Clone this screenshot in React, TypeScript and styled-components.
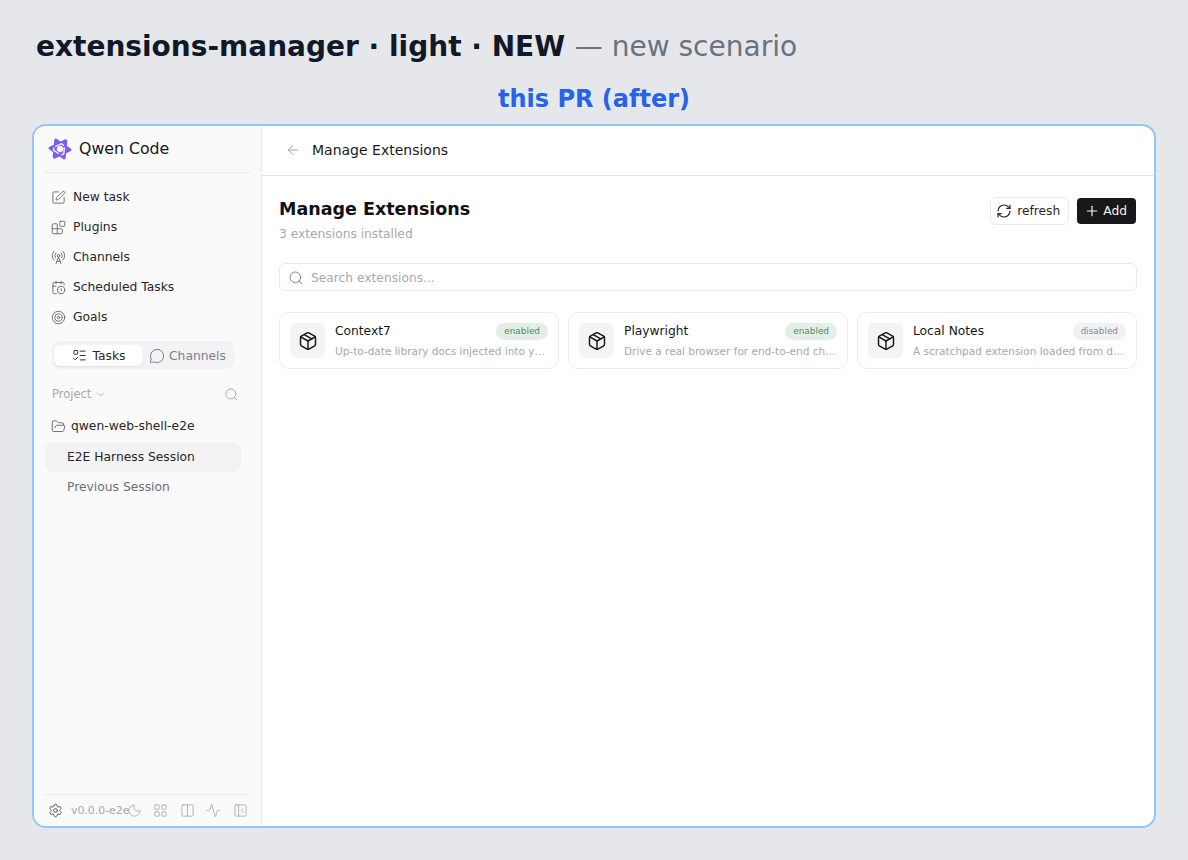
import * as React from "react";
import styled, { createGlobalStyle } from "styled-components";
import {
  Activity,
  ArrowLeft,
  Blocks,
  CalendarClock,
  ChevronDown,
  Columns2,
  FolderOpen,
  LayoutGrid,
  ListTodo,
  MessageCircle,
  Moon,
  Package,
  PanelLeftClose,
  Plus,
  RadioTower,
  RefreshCw,
  Search,
  Settings,
  SquarePen,
  Target,
} from "lucide-react";

const GlobalStyle = createGlobalStyle`
  html, body {
    margin: 0;
    padding: 0;
    height: 860px;
    overflow: hidden;
    background: #e5e7eb;
    font-family: "DejaVu Sans", sans-serif;
  }
`;

const Page = styled.div`
  height: 860px;
  box-sizing: border-box;
  padding: 28px 32px 32px;
  display: flex;
  flex-direction: column;
`;

const Heading = styled.h1`
  margin: 0 0 0 4px;
  font-size: 28px;
  line-height: 38px;
  font-weight: 700;
  color: #111827;
  white-space: nowrap;
`;

const HeadingNote = styled.span`
  font-weight: 400;
  color: #6b7280;
`;

const Caption = styled.div`
  margin-top: 18px;
  height: 40px;
  text-align: center;
  font-size: 24px;
  line-height: 30px;
  font-weight: 700;
  color: #2563eb;
`;

const Frame = styled.div`
  flex: 1;
  display: flex;
  min-height: 0;
  background: #fff;
  border: 2px solid #93c5fd;
  border-radius: 14px;
  overflow: hidden;
`;

const Sidebar = styled.aside`
  width: 207px;
  flex: none;
  display: flex;
  flex-direction: column;
  background: #fafafa;
  border-right: 1px solid #e9e9ea;
  padding: 0 10px;
`;

const Brand = styled.div`
  height: 47px;
  box-sizing: border-box;
  display: flex;
  align-items: center;
  gap: 7px;
  padding: 0 0 1px 4px;
  border-bottom: 1px solid #ececed;
  font-size: 15.75px;
  color: #18181b;
`;

const NavList = styled.nav`
  margin-top: 9px;
  display: flex;
  flex-direction: column;
`;

const NavItem = styled.div`
  height: 30px;
  display: flex;
  align-items: center;
  gap: 7.5px;
  padding-left: 6.5px;
  font-size: 12.3px;
  color: #27272a;

  svg {
    color: #6b6b73;
  }
`;

const Segments = styled.div`
  margin: 9px 0 0 8px;
  width: 182px;
  height: 28px;
  box-sizing: border-box;
  padding: 4px 2px 3px;
  display: flex;
  align-items: center;
  background: #f3f3f5;
  border-radius: 8px;
`;

const Segment = styled.div<{ $active?: boolean }>`
  height: 21px;
  flex: none;
  width: ${(p) => (p.$active ? "89px" : "auto")};
  display: flex;
  align-items: center;
  justify-content: center;
  gap: ${(p) => (p.$active ? "6px" : "4px")};
  margin-left: ${(p) => (p.$active ? "0" : "6px")};
  border-radius: 6px;
  font-size: 12.3px;
  color: ${(p) => (p.$active ? "#27272a" : "#80808a")};
  background: ${(p) => (p.$active ? "#fff" : "transparent")};
  box-shadow: ${(p) => (p.$active ? "0 1px 2px rgba(0,0,0,.08)" : "none")};
`;

const ProjectHead = styled.div`
  margin-top: 10px;
  height: 31px;
  box-sizing: border-box;
  display: flex;
  align-items: center;
  gap: 3px;
  padding: 0 12px 1px 8px;
  font-size: 11.5px;
  color: #a8a8ae;
`;

const ProjectSearch = styled.span`
  margin-left: auto;
  display: flex;
`;

const FolderRow = styled.div`
  height: 32px;
  display: flex;
  align-items: center;
  gap: 5.5px;
  padding-left: 6.5px;
  font-size: 12.3px;
  color: #27272a;

  svg {
    color: #6b6b73;
  }
`;

const SessionRow = styled.div<{ $active?: boolean }>`
  height: 30px;
  display: flex;
  align-items: center;
  padding-left: 22px;
  margin: 0 10px 0 1px;
  border-radius: 8px;
  font-size: 12.3px;
  color: ${(p) => (p.$active ? "#27272a" : "#6f6f78")};
  background: ${(p) => (p.$active ? "#f3f3f5" : "transparent")};
`;

const SideFooter = styled.div`
  margin-top: auto;
  height: 32px;
  box-sizing: border-box;
  display: flex;
  align-items: center;
  padding-left: 4px;
  border-top: 1px solid #ececed;
  color: #b0b0b6;
`;

const Version = styled.span`
  margin-left: 8px;
  width: 55.5px;
  flex: none;
  font-size: 10.9px;
  white-space: nowrap;
  color: #a8a8ae;
`;

const FooterIcons = styled.div`
  display: flex;
  align-items: center;
  gap: 11.5px;
`;

const Main = styled.main`
  flex: 1;
  min-width: 0;
  display: flex;
  flex-direction: column;
`;

const TopBar = styled.header`
  height: 50px;
  box-sizing: border-box;
  flex: none;
  display: flex;
  align-items: center;
  gap: 11px;
  padding: 0 0 1px 23px;
  border-bottom: 1px solid #e4e4e7;
  font-size: 14px;
  color: #18181b;

  svg {
    color: #a1a1aa;
  }
`;

const Content = styled.div`
  padding: 21px 17px;
`;

const TitleRow = styled.div`
  display: flex;
  justify-content: space-between;
  align-items: flex-start;
`;

const Title = styled.h2`
  margin: 0;
  font-size: 17.5px;
  line-height: 24px;
  font-weight: 700;
  color: #111113;
`;

const Subtitle = styled.div`
  margin-top: 3px;
  font-size: 12.25px;
  line-height: 20px;
  color: #a8a8ae;
`;

const Actions = styled.div`
  display: flex;
  align-items: center;
  gap: 8px;
  margin-right: 1px;
`;

const OutlineButton = styled.button`
  height: 28px;
  padding: 0 8px 0 5px;
  display: flex;
  align-items: center;
  gap: 5px;
  background: #fff;
  border: 1px solid #e9e9ec;
  border-radius: 6px;
  font: 12.25px "DejaVu Sans", sans-serif;
  color: #27272a;
`;

const DarkButton = styled.button`
  height: 26px;
  padding: 0 9px 0 7px;
  display: flex;
  align-items: center;
  gap: 3px;
  background: #18181b;
  border: 0;
  border-radius: 4px;
  font: 12.25px "DejaVu Sans", sans-serif;
  color: #f4f4f5;
`;

const SearchBox = styled.div`
  margin-top: 19px;
  height: 28px;
  box-sizing: border-box;
  display: flex;
  align-items: center;
  gap: 7px;
  padding: 1px 0 0 8px;
  border: 1px solid #e9e9ec;
  border-radius: 6px;
  font-size: 12.25px;
  color: #a8a8ae;

  svg {
    color: #85858d;
  }
`;

const CardGrid = styled.div`
  margin-top: 21px;
  display: grid;
  grid-template-columns: repeat(3, 1fr);
  gap: 9px;
`;

const Card = styled.div`
  min-width: 0;
  height: 57px;
  box-sizing: border-box;
  padding: 0 10px;
  display: flex;
  align-items: center;
  gap: 10px;
  border: 1px solid #ececee;
  border-radius: 10px;
  background: #fff;
`;

const CardIcon = styled.div`
  width: 35px;
  height: 35px;
  flex: none;
  display: flex;
  align-items: center;
  justify-content: center;
  border-radius: 6px;
  background: #f4f4f5;
  color: #18181b;
`;

const CardBody = styled.div`
  flex: 1;
  min-width: 0;
`;

const CardHead = styled.div`
  height: 18px;
  display: flex;
  align-items: center;
  justify-content: space-between;
  font-size: 12.25px;
  color: #18181b;
`;

const Badge = styled.span<{ $enabled: boolean }>`
  height: 17px;
  padding: 0 8px;
  display: flex;
  align-items: center;
  border-radius: 9px;
  font-size: 8.9px;
  color: ${(p) => (p.$enabled ? "#4b8a5f" : "#85858d")};
  background: ${(p) => (p.$enabled ? "#e3efe6" : "#f1f1f3")};
`;

const CardText = styled.div`
  margin-top: 4px;
  font-size: 10.5px;
  line-height: 15px;
  color: #a8a8ae;
  white-space: nowrap;
  overflow: hidden;
  text-overflow: ellipsis;
`;

const Logo = () => (
  <svg width="24" height="24" viewBox="0 0 24 24" fill="none">
    <g transform="rotate(-25 12 12)">
      <g stroke="#7a5cf5" strokeWidth="3.4" strokeLinejoin="round">
        <path d="M12 2.4 L20.4 16.8 L3.6 16.8 Z" />
        <path d="M12 21.6 L3.6 7.2 L20.4 7.2 Z" />
      </g>
      <path d="M8.4 7.8 L15.4 7.8 L17 10.6 M16.6 12.4 L13.4 18 L10.4 18 M8.8 15.8 L5.6 10.4 L7 8" stroke="#fff" strokeWidth="1.3" />
      <path d="M10 9.8 L14.6 11.2 L11 14.6 Z" fill="#fff" />
    </g>
  </svg>
);

const nav = [
  { label: "New task", Icon: SquarePen },
  { label: "Plugins", Icon: Blocks },
  { label: "Channels", Icon: RadioTower },
  { label: "Scheduled Tasks", Icon: CalendarClock },
  { label: "Goals", Icon: Target },
];

const extensions = [
  { name: "Context7", text: "Up-to-date library docs injected into your prompts", enabled: true },
  { name: "Playwright", text: "Drive a real browser for end-to-end checks and flows", enabled: true },
  { name: "Local Notes", text: "A scratchpad extension loaded from disk on startup", enabled: false },
];

export default function App() {
  return (
    <Page>
      <GlobalStyle />
      <Heading>
        extensions-manager · light · NEW <HeadingNote>— new scenario</HeadingNote>
      </Heading>
      <Caption>this PR (after)</Caption>
      <Frame>
        <Sidebar>
          <Brand>
            <Logo />
            Qwen Code
          </Brand>
          <NavList>
            {nav.map(({ label, Icon }) => (
              <NavItem key={label}>
                <Icon size={15} strokeWidth={1.5} />
                {label}
              </NavItem>
            ))}
          </NavList>
          <Segments>
            <Segment $active>
              <ListTodo size={15} strokeWidth={1.5} />
              Tasks
            </Segment>
            <Segment>
              <MessageCircle size={16} strokeWidth={1.5} />
              Channels
            </Segment>
          </Segments>
          <ProjectHead>
            Project
            <ChevronDown size={13} strokeWidth={1.5} />
            <ProjectSearch>
              <Search size={15} strokeWidth={1.5} />
            </ProjectSearch>
          </ProjectHead>
          <FolderRow>
            <FolderOpen size={15} strokeWidth={1.5} />
            qwen-web-shell-e2e
          </FolderRow>
          <SessionRow $active>E2E Harness Session</SessionRow>
          <SessionRow>Previous Session</SessionRow>
          <SideFooter>
            <Settings size={15} strokeWidth={1.5} color="#52525b" />
            <Version>v0.0.0-e2e</Version>
            <FooterIcons>
              <Moon size={15} strokeWidth={1.5} />
              <LayoutGrid size={15} strokeWidth={1.5} />
              <Columns2 size={15} strokeWidth={1.5} />
              <Activity size={15} strokeWidth={1.5} />
              <PanelLeftClose size={15} strokeWidth={1.5} />
            </FooterIcons>
          </SideFooter>
        </Sidebar>
        <Main>
          <TopBar>
            <ArrowLeft size={16} strokeWidth={1.5} />
            Manage Extensions
          </TopBar>
          <Content>
            <TitleRow>
              <div>
                <Title>Manage Extensions</Title>
                <Subtitle>3 extensions installed</Subtitle>
              </div>
              <Actions>
                <OutlineButton>
                  <RefreshCw size={16} strokeWidth={1.75} />
                  refresh
                </OutlineButton>
                <DarkButton>
                  <Plus size={16} strokeWidth={1.75} />
                  Add
                </DarkButton>
              </Actions>
            </TitleRow>
            <SearchBox>
              <Search size={16} strokeWidth={1.5} />
              Search extensions...
            </SearchBox>
            <CardGrid>
              {extensions.map((e) => (
                <Card key={e.name}>
                  <CardIcon>
                    <Package size={20} strokeWidth={1.75} />
                  </CardIcon>
                  <CardBody>
                    <CardHead>
                      {e.name}
                      <Badge $enabled={e.enabled}>{e.enabled ? "enabled" : "disabled"}</Badge>
                    </CardHead>
                    <CardText>{e.text}</CardText>
                  </CardBody>
                </Card>
              ))}
            </CardGrid>
          </Content>
        </Main>
      </Frame>
    </Page>
  );
}
